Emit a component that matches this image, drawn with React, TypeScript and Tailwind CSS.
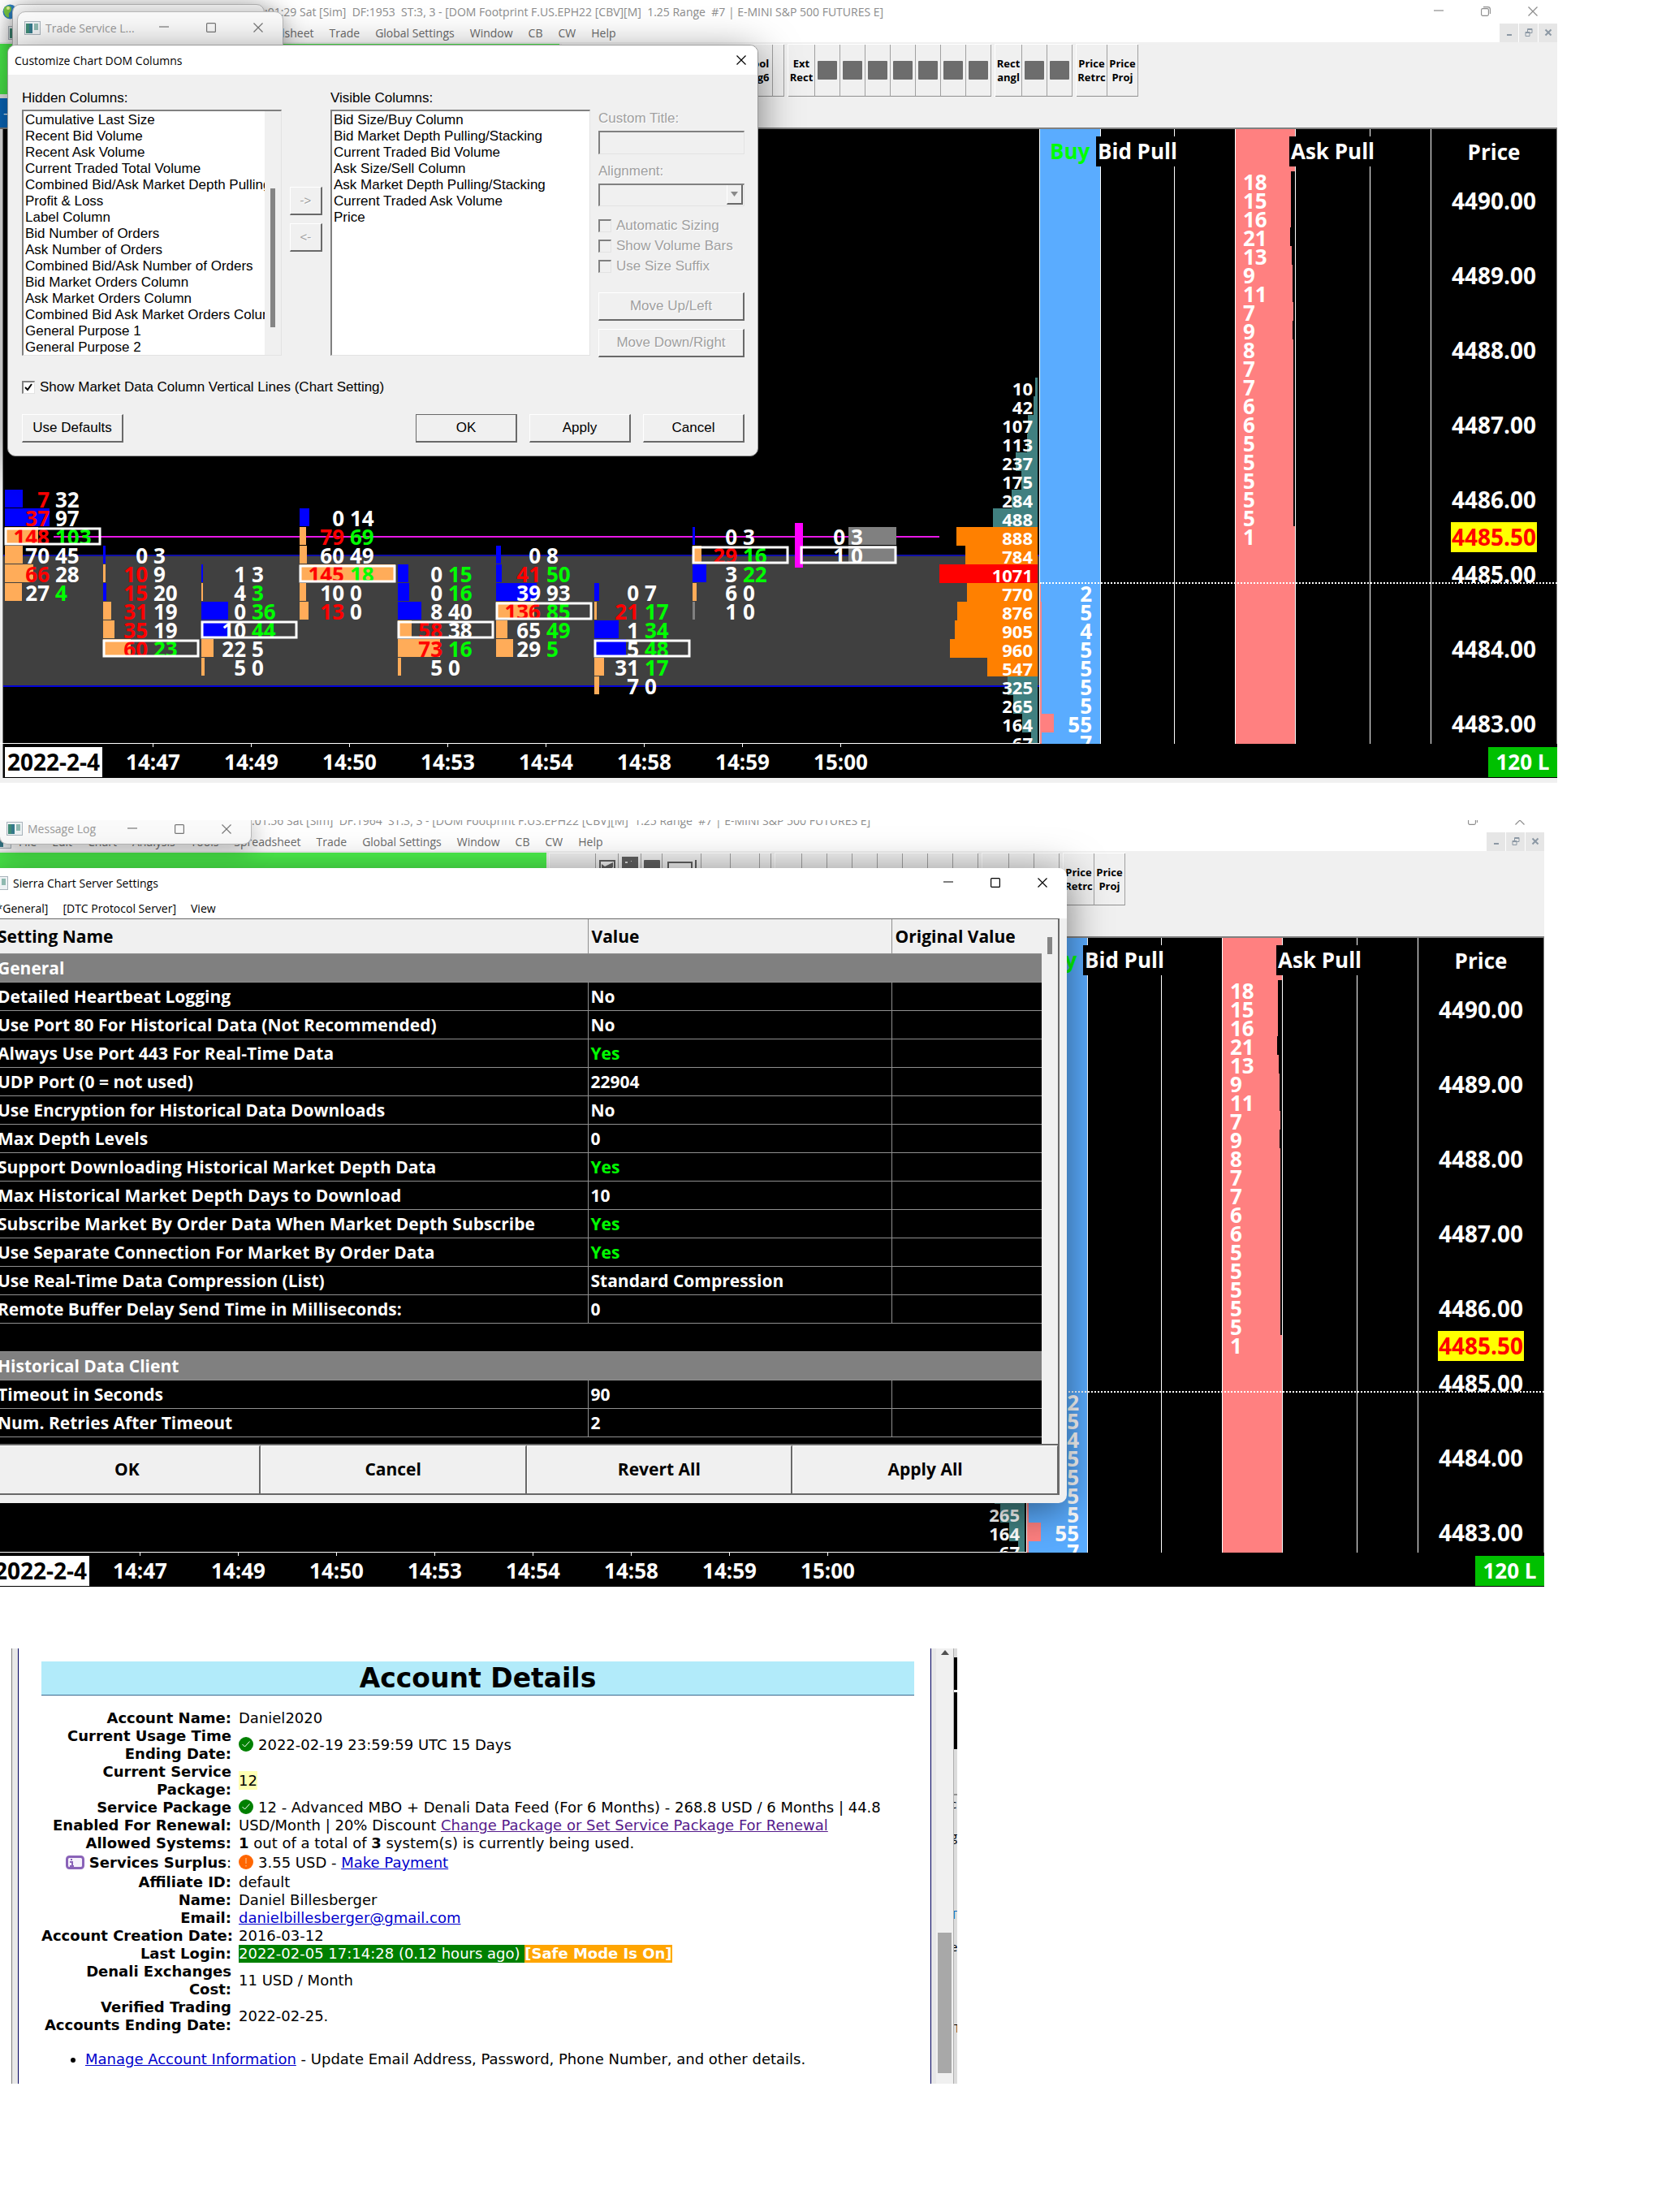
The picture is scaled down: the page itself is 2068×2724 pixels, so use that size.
import type { ReactNode } from 'react'
import clsx from 'clsx'

const ROW = 23
// Distance from the top of the plot to the row that holds 4486.00
const FIRST_ROW = 444

type Tone = 'w' | 'r' | 'g'
type BarTone = 'blue' | 'orange' | 'gray' | 'none'

const TEXT_FILL: Record<Tone, string> = { w: '#ffffff', r: '#ff0000', g: '#00ff00' }
const BAR_FILL: Record<BarTone, string> = {
  blue: '#0000ff',
  orange: '#ffac59',
  gray: '#808080',
  none: 'transparent',
}

// [bid, bid tone, ask, ask tone, bar tone, bar width, point of control]
type Cell = [number, Tone, number, Tone, BarTone, number, boolean?]

interface FootprintBar {
  x: number
  row: number
  cells: Cell[]
}

const FOOTPRINT: FootprintBar[] = [
  {
    x: 6,
    row: 0,
    cells: [
      [7, 'r', 32, 'w', 'blue', 22],
      [37, 'r', 97, 'w', 'blue', 55],
      [148, 'r', 103, 'g', 'orange', 41, true],
      [70, 'w', 45, 'w', 'orange', 22],
      [66, 'r', 28, 'w', 'orange', 35],
      [27, 'w', 4, 'g', 'orange', 21],
    ],
  },
  {
    x: 127,
    row: 3,
    cells: [
      [0, 'w', 3, 'w', 'blue', 3],
      [10, 'r', 9, 'w', 'orange', 3],
      [15, 'r', 20, 'w', 'blue', 4],
      [31, 'r', 19, 'w', 'orange', 10],
      [35, 'r', 19, 'w', 'orange', 14],
      [60, 'r', 23, 'g', 'orange', 34, true],
    ],
  },
  {
    x: 248,
    row: 4,
    cells: [
      [1, 'w', 3, 'w', 'blue', 2],
      [4, 'w', 3, 'g', 'orange', 2],
      [0, 'w', 36, 'g', 'blue', 33],
      [10, 'w', 44, 'g', 'blue', 34, true],
      [22, 'w', 5, 'w', 'orange', 15],
      [5, 'w', 0, 'w', 'orange', 4],
    ],
  },
  {
    x: 369,
    row: 1,
    cells: [
      [0, 'w', 14, 'w', 'blue', 12],
      [79, 'r', 69, 'g', 'orange', 8],
      [60, 'w', 49, 'w', 'orange', 9],
      [145, 'r', 18, 'g', 'orange', 118, true],
      [10, 'w', 0, 'w', 'orange', 8],
      [13, 'r', 0, 'w', 'orange', 11],
    ],
  },
  {
    x: 490,
    row: 4,
    cells: [
      [0, 'w', 15, 'g', 'blue', 13],
      [0, 'w', 16, 'g', 'blue', 14],
      [8, 'w', 40, 'w', 'blue', 29],
      [58, 'r', 38, 'w', 'orange', 17, true],
      [73, 'r', 16, 'g', 'orange', 52],
      [5, 'w', 0, 'w', 'orange', 4],
    ],
  },
  {
    x: 611,
    row: 3,
    cells: [
      [0, 'w', 8, 'w', 'blue', 6],
      [41, 'r', 50, 'g', 'blue', 7],
      [39, 'w', 93, 'w', 'blue', 50],
      [136, 'r', 85, 'g', 'orange', 47, true],
      [65, 'w', 49, 'g', 'orange', 14],
      [29, 'w', 5, 'g', 'orange', 21],
    ],
  },
  {
    x: 732,
    row: 5,
    cells: [
      [0, 'w', 7, 'w', 'blue', 6],
      [21, 'r', 17, 'g', 'orange', 3],
      [1, 'w', 34, 'g', 'blue', 30],
      [5, 'w', 48, 'g', 'blue', 39, true],
      [31, 'w', 17, 'g', 'orange', 12],
      [7, 'w', 0, 'w', 'orange', 6],
    ],
  },
  {
    x: 853,
    row: 2,
    cells: [
      [0, 'w', 3, 'w', 'blue', 3],
      [29, 'r', 16, 'g', 'orange', 11, true],
      [3, 'w', 22, 'g', 'blue', 17],
      [6, 'w', 0, 'w', 'orange', 5],
      [1, 'w', 0, 'w', 'gray', 3],
    ],
  },
  {
    x: 986,
    row: 2,
    cells: [
      [0, 'w', 3, 'w', 'none', 0],
      [1, 'w', 0, 'w', 'none', 0, true],
    ],
  },
]

const VOLUMES = [
  10, 42, 107, 113, 237, 175, 284, 488, 888, 784, 1071, 770, 876, 905, 960, 547, 325, 265, 164, 67,
]
const ASK_SIZES = [18, 15, 16, 21, 13, 9, 11, 7, 9, 8, 7, 7, 6, 6, 5, 5, 5, 5, 5, 1]
const BID_SIZES = [2, 5, 4, 5, 5, 5, 5, 55, 7]
const TIMES = ['14:47', '14:49', '14:50', '14:53', '14:54', '14:58', '14:59', '15:00']
const MENUS = [
  'File',
  'Edit',
  'Chart',
  'Analysis',
  'Tools',
  'Spreadsheet',
  'Trade',
  'Global Settings',
  'Window',
  'CB',
  'CW',
  'Help',
]

const HIDDEN_COLUMNS = [
  'Cumulative Last Size',
  'Recent Bid Volume',
  'Recent Ask Volume',
  'Current Traded Total Volume',
  'Combined Bid/Ask Market Depth Pulling/Stacking',
  'Profit & Loss',
  'Label Column',
  'Bid Number of Orders',
  'Ask Number of Orders',
  'Combined Bid/Ask Number of Orders',
  'Bid Market Orders Column',
  'Ask Market Orders Column',
  'Combined Bid Ask Market Orders Column',
  'General Purpose 1',
  'General Purpose 2',
]
const VISIBLE_COLUMNS = [
  'Bid Size/Buy Column',
  'Bid Market Depth Pulling/Stacking',
  'Current Traded Bid Volume',
  'Ask Size/Sell Column',
  'Ask Market Depth Pulling/Stacking',
  'Current Traded Ask Volume',
  'Price',
]

const GENERAL_SETTINGS: [string, string][] = [
  ['Detailed Heartbeat Logging', 'No'],
  ['Use Port 80 For Historical Data (Not Recommended)', 'No'],
  ['Always Use Port 443 For Real-Time Data', 'Yes'],
  ['UDP Port (0 = not used)', '22904'],
  ['Use Encryption for Historical Data Downloads', 'No'],
  ['Max Depth Levels', '0'],
  ['Support Downloading Historical Market Depth Data', 'Yes'],
  ['Max Historical Market Depth Days to Download', '10'],
  ['Subscribe Market By Order Data When Market Depth Subscribe', 'Yes'],
  ['Use Separate Connection For Market By Order Data', 'Yes'],
  ['Use Real-Time Data Compression (List)', 'Standard Compression'],
  ['Remote Buffer Delay Send Time in Milliseconds:', '0'],
]
const HISTORICAL_SETTINGS: [string, string][] = [
  ['Timeout in Seconds', '90'],
  ['Num. Retries After Timeout', '2'],
]

/* ---------- small glyphs ---------- */

function MinGlyph() {
  return (
    <svg className="h-3 w-3" viewBox="0 0 12 12" aria-hidden="true">
      <path d="M0 5h12" stroke="currentColor" strokeWidth="1.2" />
    </svg>
  )
}

function MaxGlyph() {
  return (
    <svg className="h-3 w-3" viewBox="0 0 12 12" aria-hidden="true">
      <rect x="0.6" y="0.6" width="10.8" height="10.8" rx="1" fill="none" stroke="currentColor" strokeWidth="1.2" />
    </svg>
  )
}

function RestoreGlyph() {
  return (
    <svg className="h-3 w-3" viewBox="0 0 12 12" aria-hidden="true">
      <rect x="0.6" y="2.6" width="8.8" height="8.8" rx="1.6" fill="none" stroke="currentColor" strokeWidth="1.1" />
      <path d="M3 0.6h5.6a2.8 2.8 0 0 1 2.8 2.8V9" fill="none" stroke="currentColor" strokeWidth="1.1" />
    </svg>
  )
}

function CloseGlyph() {
  return (
    <svg className="h-3 w-3" viewBox="0 0 12 12" aria-hidden="true">
      <path d="M0.5 0.5l11 11M11.5 0.5l-11 11" stroke="currentColor" strokeWidth="1.2" />
    </svg>
  )
}

function AppIcon() {
  return (
    <svg className="h-[17px] w-5 shrink-0" viewBox="0 0 20 17" aria-hidden="true">
      <rect x="0.5" y="0.5" width="19" height="16" fill="#eef2f4" stroke="#a9b4bc" />
      <rect x="2" y="3" width="8" height="12" fill="#3f8a76" />
      <rect x="6" y="3" width="4" height="12" fill="#2f6f9a" opacity="0.6" />
      <rect x="12" y="3" width="5" height="8" fill="#8fb9b0" />
    </svg>
  )
}

function Globe() {
  return (
    <svg className="h-[19px] w-[19px] shrink-0" viewBox="0 0 19 19" aria-hidden="true">
      <circle cx="9.5" cy="9.5" r="9" fill="#2f7fc0" />
      <path d="M4 3c4-2 8 0 7 4s-4 3-3 7-3 3-5-1-2-8 1-10z" fill="#7ac943" />
      <circle cx="7" cy="5" r="2" fill="#e9f59a" />
    </svg>
  )
}

function StatusDot({ kind }: { kind: 'ok' | 'warn' }) {
  return (
    <svg className="mr-[6px] -mt-1 inline-block h-[18px] w-[18px]" viewBox="0 0 18 18" aria-hidden="true">
      <circle cx="9" cy="9" r="9" fill={kind === 'ok' ? '#008000' : '#ff6600'} />
      {kind === 'ok' ? (
        <path d="M4.5 9l3 3 6-6.500" fill="none" stroke="#fff" strokeWidth="1" />
      ) : (
        <path d="M9 4v7M9 13v1.500" stroke="#ffc89a" strokeWidth="1" />
      )}
    </svg>
  )
}

/* ---------- chart window ---------- */

function ToolButton({ className, children }: { className: string; children?: ReactNode }) {
  return (
    <button
      type="button"
      className={clsx(
        'flex h-16 shrink-0 flex-col items-center justify-center border-r border-b border-r-[#a0a0a0] border-b-[#909090] text-[13px] leading-[17px] font-bold text-black',
        className,
      )}
    >
      {children}
    </button>
  )
}

function Square() {
  return <span className="h-[23px] w-6 rounded-[1px] bg-[#6d6d6d]" />
}

function Toolbar() {
  return (
    <div className="flex h-[107px] flex-col gap-[2px] border-b-2 border-[#808080] bg-[#f0f0f0] pt-[2px]">
      <div className="flex">
        <div className="mr-[3px] h-[62px] w-[689px] shrink-0 bg-[#4cf04c]" />
        <div className="mr-1 flex border-t border-white">
          <ToolButton className="w-[58px] border-l border-l-white" />
          <ToolButton className="w-7 justify-start pt-2">
            <svg className="h-6 w-5" viewBox="0 0 20 24" aria-hidden="true">
              <rect x="1" y="1" width="18" height="20" fill="none" stroke="#606060" strokeWidth="2" />
              <path d="M3 5l4 3 4-2 6-3v6l-4 3v6H6v-5l-3-2z" fill="#606060" />
            </svg>
          </ToolButton>
          <ToolButton className="w-7 justify-start pt-1">
            <svg className="h-7 w-5" viewBox="0 0 20 28" aria-hidden="true">
              <rect width="20" height="28" fill="#606060" />
              <path d="M4 6h3v2H4zM11 5h1v1h-1z" fill="#ddd" />
            </svg>
          </ToolButton>
          <ToolButton className="w-[26px] justify-start pt-2">
            <span className="h-6 w-5 rounded-[1px] bg-[#606060]" />
          </ToolButton>
          <ToolButton className="w-12 justify-start pt-2">
            <svg className="h-6 w-9" viewBox="0 0 36 24" aria-hidden="true">
              <path d="M1 22V3h29v19" fill="none" stroke="#606060" strokeWidth="2" />
              <path d="M35 0v20" stroke="#606060" strokeWidth="2" />
            </svg>
          </ToolButton>
          <ToolButton className="w-9" />
          <ToolButton className="w-9 text-[#777777]">
            <span>Tool</span>
            <span>Cfg6</span>
          </ToolButton>
          <ToolButton className="w-[14px]" />
        </div>
        <div className="mr-1 flex border-t border-l border-white">
          <ToolButton className="w-[33px]">
            <span>Ext</span>
            <span>Rect</span>
          </ToolButton>
          {Array.from({ length: 7 }, (_, i) => (
            <ToolButton key={i} className="w-[31px]">
              <Square />
            </ToolButton>
          ))}
        </div>
        <div className="mr-1 flex border-t border-l border-white">
          <ToolButton className="w-[33px]">
            <span>Rect</span>
            <span>angl</span>
          </ToolButton>
          <ToolButton className="w-[31px]">
            <Square />
          </ToolButton>
          <ToolButton className="w-[31px]">
            <Square />
          </ToolButton>
        </div>
        <div className="flex border-t border-l border-white">
          <ToolButton className="w-[38px]">
            <span>Price</span>
            <span>Retrc</span>
          </ToolButton>
          <ToolButton className="w-[38px]">
            <span>Price</span>
            <span>Proj</span>
          </ToolButton>
        </div>
      </div>
      <div className="flex h-9 w-[120px] items-center bg-[#0a6cc4] pl-1 text-white">–</div>
    </div>
  )
}

function FootprintCell({ x, y, cell }: { x: number; y: number; cell: Cell }) {
  const [bid, bidTone, ask, askTone, barTone, barWidth, poc] = cell
  return (
    <g>
      <rect x={x} y={y} width={barWidth} height={ROW - 1} fill={BAR_FILL[barTone]} />
      <text x={x + 55} y={y + 22} textAnchor="end" fill={TEXT_FILL[bidTone]}>
        {bid}
      </text>
      <text x={x + 62} y={y + 22} fill={TEXT_FILL[askTone]}>
        {ask}
      </text>
      {poc && (
        <rect x={x + 1} y={y + 2} width={116} height={19} fill="none" stroke="#ffffff" strokeWidth={3} />
      )}
    </g>
  )
}

function Footprint() {
  return (
    <svg className="h-full w-full text-[26px] font-bold" aria-label="DOM Footprint">
      <rect x="0" y="525" width="100%" height="161" fill="#404040" />
      <rect x="0" y="524" width="100%" height="2" fill="#1010a8" />
      <rect x="0" y="685" width="100%" height="2" fill="#0000d8" />
      <rect x="66" y="501" width="1091" height="2" fill="#e818e8" />
      <rect x="979" y="485" width="10" height="55" fill="#ff00ff" />
      <rect x="1045" y="490" width="59" height="22" fill="#808080" />
      <rect x="1045" y="513" width="59" height="22" fill="#808080" />
      {FOOTPRINT.map((bar) =>
        bar.cells.map((cell, i) => (
          <FootprintCell key={`${bar.x}-${i}`} x={bar.x} y={FIRST_ROW + (bar.row + i) * ROW} cell={cell} />
        )),
      )}
    </svg>
  )
}

function VolumeProfile() {
  return (
    <ul className="absolute top-[306px] right-[2px] w-[121px] text-[22px] leading-[26px] font-bold text-white">
      {VOLUMES.map((v) => (
        <li key={v} className="relative flex h-[23px] justify-end">
          <span
            className={clsx(
              'absolute inset-y-0 right-0',
              v === 1071 ? 'bg-[#ff0000]' : v > 500 ? 'bg-[#ff8000]' : 'bg-[#408080]',
            )}
            style={{ width: Math.max(3, Math.round((v / 1071) * 121)) }}
          />
          <span className="relative pr-[6px]">{v}</span>
        </li>
      ))}
    </ul>
  )
}

function DomLadder() {
  return (
    <div className="relative flex shrink-0 text-[26px] leading-[26px] font-bold text-white">
      <div className="w-[75px] overflow-hidden border-r border-white bg-[#5aacff] pt-[559px]">
        {BID_SIZES.map((size, i) => (
          <div key={i} className="relative flex h-[23px] justify-end pr-[10px]">
            <span
              className="absolute inset-y-0 left-0 bg-[#ff8080]"
              style={{ width: Math.max(i > 0 ? 2 : 0, Math.round(size * 0.31)) }}
            />
            <span className="relative">{size}</span>
          </div>
        ))}
      </div>
      <div className="w-[91px] border-r border-white" />
      <div className="w-[75px] border-r border-white" />
      <div className="w-[74px] border-r border-white bg-[#ff8080] pt-[52px]">
        {ASK_SIZES.map((size, i) => (
          <div key={i} className="relative h-[23px] pl-[9px]">
            <span
              className="absolute inset-y-0 right-0 bg-black"
              style={{ width: size > 1 ? Math.max(2, Math.round(size * 0.3)) : 0 }}
            />
            <span className="relative">{size}</span>
          </div>
        ))}
      </div>
      <div className="w-[92px] border-r border-white" />
      <div className="w-[75px] border-r border-white" />
      <div className="flex w-[155px] flex-col items-center border-r border-[#808080] text-[28px] leading-[37px]">
        <span className="mt-[10px] mb-[23px] text-[26px]">Price</span>
        {['4490.00', '4489.00', '4488.00', '4487.00'].map((price) => (
          <span key={price} className="mb-[55px]">
            {price}
          </span>
        ))}
        <span className="mb-[9px]">4486.00</span>
        <span className="bg-[#ffff00] px-px text-[#ff0000]">4485.50</span>
        <span className="mt-[9px]">4485.00</span>
        <span className="mt-[55px]">4484.00</span>
        <span className="mt-[55px]">4483.00</span>
      </div>

      {/* headings spill over the column lines */}
      <span className="absolute top-[9px] left-3 leading-[37px] text-[#00ff00]">Buy</span>
      <span className="absolute top-[9px] left-[69px] bg-black pl-[2px] leading-[37px]">Bid Pull</span>
      <span className="absolute top-[9px] left-[307px] bg-black pl-[2px] leading-[37px]">Ask Pull</span>
      <span className="absolute inset-x-0 top-[558px] border-t-2 border-dotted border-white" />
    </div>
  )
}

function ChartWindow({ title }: { title: string }) {
  return (
    <div className="bg-white">
      <div className="flex h-7 items-center text-[#8c8c8c]">
        <div className="w-[326px] shrink-0 pl-[3px]">
          <Globe />
        </div>
        <h2 className="flex-1 text-[14px] whitespace-pre">{title}</h2>
        <div className="flex gap-[46px] pr-6">
          <button type="button" aria-label="Minimize">
            <MinGlyph />
          </button>
          <button type="button" aria-label="Restore">
            <RestoreGlyph />
          </button>
          <button type="button" aria-label="Close">
            <CloseGlyph />
          </button>
        </div>
      </div>
      <div className="flex h-6 items-center">
        <div className="w-[39px] shrink-0 pl-[10px]">
          <AppIcon />
        </div>
        <nav className="flex flex-1 gap-[19px] text-[14px] text-[#6a6a6a]">
          {MENUS.map((m) => (
            <button key={m} type="button" className="whitespace-nowrap">
              {m}
            </button>
          ))}
        </nav>
        <div className="flex gap-px text-[#8c98a4]">
          <button type="button" aria-label="Minimize chart" className="flex h-[23px] w-[23px] items-center justify-center bg-[#e6e6e6]">
            <svg className="h-[10px] w-[10px]" viewBox="0 0 10 10">
              <path d="M2 8h6" stroke="currentColor" strokeWidth="2" />
            </svg>
          </button>
          <button type="button" aria-label="Restore chart" className="flex h-[23px] w-[23px] items-center justify-center bg-[#e6e6e6]">
            <svg className="h-[10px] w-[10px]" viewBox="0 0 10 10" fill="none" stroke="currentColor">
              <path d="M1 4.500h5v5H1zM3.500 4.500v-4h5.500v5H6M1 5.500h5M3.500 1.500H9" />
            </svg>
          </button>
          <button type="button" aria-label="Close chart" className="flex h-[23px] w-[23px] items-center justify-center bg-[#e6e6e6]">
            <svg className="h-[10px] w-[10px]" viewBox="0 0 10 10">
              <path d="M1.500 1.500l7 7M8.500 1.500l-7 7" stroke="currentColor" strokeWidth="2" />
            </svg>
          </button>
        </div>
      </div>
      <Toolbar />
      <div className="bg-black">
        <div className="flex h-[757px] overflow-hidden">
          <div className="relative min-w-0 flex-1 overflow-hidden border-r border-b border-white">
            <Footprint />
            <span className="absolute inset-y-0 left-0 w-1 border-r border-[#808080] bg-[#f0f0f0]" />
            <VolumeProfile />
          </div>
          <DomLadder />
        </div>
        <div className="flex h-[42px] text-[26px] leading-[44px] font-bold text-white">
          <span className="w-1 shrink-0 border-r border-[#808080] bg-[#f0f0f0]" />
          <span className="mt-1 mr-[2px] ml-[2px] h-[37px] w-[120px] shrink-0 bg-white text-center text-[28px] leading-[37px] whitespace-nowrap text-black">
            2022-2-4
          </span>
          {TIMES.map((t) => (
            <span key={t} className="flex w-[121px] shrink-0 flex-col items-center">
              <span className="h-1 w-px bg-white" />
              <span className="leading-[37px]">{t}</span>
            </span>
          ))}
          <span className="mt-1 ml-auto h-[37px] w-[85px] bg-[#00c000] text-center leading-[37px]">120 L</span>
        </div>
      </div>
    </div>
  )
}

/* ---------- floating windows ---------- */

function SmallWindow({ title, className }: { title: string; className: string }) {
  return (
    <div
      className={clsx(
        'absolute flex items-center border border-[#b8b8b8] bg-[#fafafa] text-[#999999] shadow-[0_4px_30px_rgba(0,0,0,0.35)]',
        className,
      )}
    >
      <AppIcon />
      <h3 className="ml-[6px] flex-1 text-[14px] whitespace-nowrap">{title}</h3>
      <div className="flex gap-[46px] text-[#777777]">
        <button type="button" aria-label="Minimize">
          <MinGlyph />
        </button>
        <button type="button" aria-label="Maximize">
          <MaxGlyph />
        </button>
        <button type="button" aria-label="Close">
          <CloseGlyph />
        </button>
      </div>
    </div>
  )
}

function ClassicButton({
  children,
  disabled,
  primary,
  className,
}: {
  children: ReactNode
  disabled?: boolean
  primary?: boolean
  className: string
}) {
  return (
    <button
      type="button"
      disabled={disabled}
      className={clsx(
        'h-[35px] shrink-0 border-t border-l border-r-2 border-b-2 border-r-[#696969] border-b-[#696969] bg-[#f0f0f0]',
        primary ? 'border-t-[#696969] border-l-[#696969]' : 'border-t-white border-l-white',
        disabled ? 'text-[#a0a0a0] [text-shadow:1px_1px_0_#fff]' : 'text-black',
        className,
      )}
    >
      {children}
    </button>
  )
}

const SUNKEN = 'border-t-2 border-l-2 border-r border-b border-t-[#808080] border-l-[#808080] border-r-[#e3e3e3] border-b-[#e3e3e3]'

function ListBox({ id, items, scroll }: { id: string; items: string[]; scroll?: boolean }) {
  return (
    <div className={clsx('flex h-[303px] w-[320px] bg-white', SUNKEN)}>
      <ul role="listbox" aria-labelledby={id} className="min-w-0 flex-1 overflow-hidden pt-px leading-5">
        {items.map((item) => (
          <li key={item} role="option" aria-selected={false} className="h-5 pl-[2px] whitespace-nowrap">
            {item}
          </li>
        ))}
      </ul>
      {scroll && (
        <div className="w-5 bg-[#f0f0f0] pt-[95px] pl-[7px]">
          <div className="h-[171px] w-[6px] bg-[#858585]" />
        </div>
      )}
    </div>
  )
}

function DisabledCheck({ label }: { label: string }) {
  return (
    <label className="flex h-[25px] items-center gap-[6px]">
      <input type="checkbox" disabled className={clsx('h-4 w-4 appearance-none bg-[#f0f0f0]', SUNKEN)} />
      {label}
    </label>
  )
}

function CustomizeDialog() {
  return (
    <div
      role="dialog"
      aria-labelledby="dom-title"
      className="absolute top-[55px] left-[9px] w-[925px] overflow-hidden rounded-[10px] border border-[#9a9a9a] bg-[#f0f0f0] pb-4 shadow-[0_12px_50px_rgba(0,0,0,0.5)]"
    >
      <div className="flex h-9 items-center justify-between bg-white pr-[14px] pl-2">
        <h2 id="dom-title" className="text-[14px]">
          Customize Chart DOM Columns
        </h2>
        <button type="button" aria-label="Close">
          <CloseGlyph />
        </button>
      </div>
      <div className="pt-[19px] pr-4 pl-[17px] font-['Liberation_Sans',Arial,sans-serif] text-[17px] leading-5 text-black">
        <div className="flex">
          <div className="shrink-0">
            <div id="hidden-cols" className="mb-1">
              Hidden Columns:
            </div>
            <ListBox id="hidden-cols" items={HIDDEN_COLUMNS} scroll />
          </div>
          <div className="flex w-[60px] shrink-0 flex-col items-center gap-[10px] pt-[119px]">
            <ClassicButton disabled className="w-10 text-[15px]">
              -&gt;
            </ClassicButton>
            <ClassicButton disabled className="w-10 text-[15px]">
              &lt;-
            </ClassicButton>
          </div>
          <div className="shrink-0">
            <div id="visible-cols" className="mb-1">
              Visible Columns:
            </div>
            <ListBox id="visible-cols" items={VISIBLE_COLUMNS} />
          </div>
          <div className="ml-[10px] flex min-w-0 flex-1 flex-col pt-[25px] text-[#a0a0a0] [text-shadow:1px_1px_0_#fff]">
            <label htmlFor="custom-title">Custom Title:</label>
            <input id="custom-title" disabled className={clsx('mt-[5px] h-[29px] w-full bg-[#f0f0f0]', SUNKEN)} />
            <label htmlFor="alignment" className="mt-[11px]">
              Alignment:
            </label>
            <div className="relative mt-[5px]">
              <select id="alignment" disabled className={clsx('h-7 w-full appearance-none bg-[#f0f0f0]', SUNKEN)} />
              <span className="absolute top-[2px] right-[2px] flex h-6 w-5 items-center justify-center border-r-2 border-b-2 border-l border-[#696969] border-l-white text-[#8a8a8a]">
                <svg className="h-[6px] w-[9px]" viewBox="0 0 9 6" aria-hidden="true">
                  <path d="M0 0h9L4.500 6z" fill="currentColor" />
                </svg>
              </span>
            </div>
            <div className="mt-[11px] mb-5">
              <DisabledCheck label="Automatic Sizing" />
              <DisabledCheck label="Show Volume Bars" />
              <DisabledCheck label="Use Size Suffix" />
            </div>
            <ClassicButton disabled className="mb-[10px] w-full">
              Move Up/Left
            </ClassicButton>
            <ClassicButton disabled className="w-full">
              Move Down/Right
            </ClassicButton>
          </div>
        </div>
        <label className="mt-[27px] flex items-center gap-[6px]">
          <span className="relative flex">
            <input type="checkbox" defaultChecked className={clsx('h-4 w-4 appearance-none bg-white', SUNKEN)} />
            <svg className="absolute top-[3px] left-[3px] h-[10px] w-[10px]" viewBox="0 0 10 10" aria-hidden="true">
              <path d="M1 5l3 3 5-7" fill="none" stroke="#000" strokeWidth="2" />
            </svg>
          </span>
          Show Market Data Column Vertical Lines (Chart Setting)
        </label>
        <div className="mt-[23px] flex gap-[15px]">
          <ClassicButton className="mr-auto w-[125px]">Use Defaults</ClassicButton>
          <ClassicButton primary className="w-[125px]">
            OK
          </ClassicButton>
          <ClassicButton className="w-[125px]">Apply</ClassicButton>
          <ClassicButton className="w-[125px]">Cancel</ClassicButton>
        </div>
      </div>
    </div>
  )
}

function SettingRows({ rows }: { rows: [string, string][] }) {
  return rows.map(([name, value]) => (
    <tr key={name} className="h-[35px] border-b border-[#909090]">
      <td className="border-r border-[#909090] pl-1">{name}</td>
      <td className={clsx('border-r border-[#909090] pl-[3px]', value === 'Yes' && 'text-[#00ff00]')}>{value}</td>
      <td />
    </tr>
  ))
}

function SectionRow({ children }: { children: ReactNode }) {
  return (
    <tr className="h-[35px] border-b border-[#909090] bg-[#808080]">
      <th colSpan={3} className="pl-1 text-left">
        {children}
      </th>
    </tr>
  )
}

function ServerSettingsDialog() {
  return (
    <div
      role="dialog"
      aria-labelledby="server-title"
      className="absolute top-[59px] -left-4 w-[1330px] overflow-hidden rounded-[10px] bg-[#f0f0f0] shadow-[0_8px_50px_rgba(0,0,0,0.5)]"
    >
      <div className="flex h-9 items-center bg-white pr-[24px] pl-[6px]">
        <AppIcon />
        <h2 id="server-title" className="ml-[6px] flex-1 text-[14px]">
          Sierra Chart Server Settings
        </h2>
        <div className="flex gap-[46px] text-black">
          <button type="button" aria-label="Minimize">
            <MinGlyph />
          </button>
          <button type="button" aria-label="Maximize">
            <MaxGlyph />
          </button>
          <button type="button" aria-label="Close">
            <CloseGlyph />
          </button>
        </div>
      </div>
      <nav className="flex h-[26px] items-center gap-[18px] bg-white pl-[7px] text-[14px]">
        <button type="button">[*General]</button>
        <button type="button">[DTC Protocol Server]</button>
        <button type="button">View</button>
      </nav>
      <div className="mx-[9px] mb-[10px] border-t border-r-2 border-[#696969]">
        <div className="flex h-[646px] overflow-hidden bg-black">
          <table className="flex-1 table-fixed self-start text-[21px] leading-6 font-bold text-white">
            <colgroup>
              <col className="w-[731px]" />
              <col className="w-[374px]" />
              <col />
            </colgroup>
            <thead>
              <tr className="h-[42px] border-b border-[#909090] bg-[#f0f0f0] text-left text-black">
                <th className="border-r border-[#909090] pl-1">Setting Name</th>
                <th className="border-r border-[#909090] pl-1">Value</th>
                <th className="pl-1">Original Value</th>
              </tr>
            </thead>
            <tbody>
              <SectionRow>General</SectionRow>
              <SettingRows rows={GENERAL_SETTINGS} />
              <tr className="h-[35px] border-b border-[#909090]">
                <td colSpan={3} />
              </tr>
              <SectionRow>Historical Data Client</SectionRow>
              <SettingRows rows={HISTORICAL_SETTINGS} />
            </tbody>
          </table>
          <div className="w-5 shrink-0 bg-[#f0f0f0] pt-[22px] pl-[7px]">
            <div className="h-[21px] w-[6px] bg-[#858585]" />
          </div>
        </div>
        <div className="flex border-t-2 border-b-2 border-[#696969]">
          {['OK', 'Cancel', 'Revert All', 'Apply All'].map((label) => (
            <button
              key={label}
              type="button"
              className="h-[59px] flex-1 border-t border-r-2 border-l border-[#696969] border-t-white border-l-white text-[21px] font-bold text-black last:border-r"
            >
              {label}
            </button>
          ))}
        </div>
      </div>
    </div>
  )
}

/* ---------- account page ---------- */

function AccountRow({ label, children }: { label: ReactNode; children: ReactNode }) {
  return (
    <tr>
      <th className="p-0 text-right whitespace-nowrap">{label}</th>
      <td className="p-0 pl-[9px]">{children}</td>
    </tr>
  )
}

const LINK = 'text-[#0000cc] underline'

function AccountDetails() {
  return (
    <section className="mt-[76px] ml-[14px] flex h-[536px] w-[1165px] overflow-hidden bg-white">
      <div className="w-[9px] shrink-0 border-r border-l border-r-[#000060] border-l-[#808080] bg-[#e8e8e8]" />
      <div className="flex-1 pt-4 pr-5 pl-7 font-['DejaVu_Sans',Verdana,sans-serif] text-[18px] leading-[22px] text-black">
        <h1 className="h-[42px] border-b border-[#3a6a90] bg-[#b2ebfa] text-center text-[33px] leading-[42px] font-bold">
          Account Details
        </h1>
        <table className="mt-[17px] w-full table-fixed">
          <colgroup>
            <col className="w-[234px]" />
            <col />
          </colgroup>
          <tbody>
            <AccountRow label="Account Name:">Daniel2020</AccountRow>
            <AccountRow
              label={
                <>
                  Current Usage Time
                  <br />
                  Ending Date:
                </>
              }
            >
              <StatusDot kind="ok" />
              2022-02-19 23:59:59 UTC 15 Days
            </AccountRow>
            <AccountRow
              label={
                <>
                  Current Service
                  <br />
                  Package:
                </>
              }
            >
              <span className="bg-[#ffffb3] py-px">12</span>
            </AccountRow>
            <AccountRow
              label={
                <>
                  Service Package
                  <br />
                  Enabled For Renewal:
                </>
              }
            >
              <StatusDot kind="ok" />
              12 - Advanced MBO + Denali Data Feed (For 6 Months) - 268.8 USD / 6 Months | 44.8
              <br />
              USD/Month | 20% Discount{' '}
              <a href="#renewal" className="text-[#551a8b] underline">
                Change Package or Set Service Package For Renewal
              </a>
            </AccountRow>
            <AccountRow label="Allowed Systems:">
              <b>1</b> out of a total of <b>3</b> system(s) is currently being used.
            </AccountRow>
            <AccountRow
              label={
                <span className="flex h-[26px] items-center justify-end gap-[6px]">
                  <svg className="h-[18px] w-[23px]" viewBox="0 0 23 18" aria-hidden="true">
                    <rect x="1.500" y="1.500" width="20" height="14" rx="3" fill="#f6f2fb" stroke="#8a63b8" strokeWidth="3" />
                    <path d="M5 8h3v5M5 13h5M7 4v2" fill="none" stroke="#8a63b8" strokeWidth="2" />
                  </svg>
                  <span>
                    Services Surplus<span className="font-normal">:</span>
                  </span>
                </span>
              }
            >
              <StatusDot kind="warn" />
              3.55 USD -{' '}
              <a href="#payment" className={LINK}>
                Make Payment
              </a>
            </AccountRow>
            <AccountRow label="Affiliate ID:">default</AccountRow>
            <AccountRow label="Name:">Daniel Billesberger</AccountRow>
            <AccountRow label="Email:">
              <a href="mailto:danielbillesberger@gmail.com" className={LINK}>
                danielbillesberger@gmail.com
              </a>
            </AccountRow>
            <AccountRow label="Account Creation Date:">2016-03-12</AccountRow>
            <AccountRow label="Last Login:">
              <span className="flex text-white">
                <span className="bg-[#008000] whitespace-pre">2022-02-05 17:14:28 (0.12 hours ago) </span>
                <b className="bg-[#ffa500]">[Safe Mode Is On]</b>
              </span>
            </AccountRow>
            <AccountRow
              label={
                <>
                  Denali Exchanges
                  <br />
                  Cost:
                </>
              }
            >
              11 USD / Month
            </AccountRow>
            <AccountRow
              label={
                <>
                  Verified Trading
                  <br />
                  Accounts Ending Date:
                </>
              }
            >
              2022-02-25.
            </AccountRow>
          </tbody>
        </table>
        <ul className="mt-5 list-disc pl-[54px]">
          <li>
            <a href="#manage" className={LINK}>
              Manage Account Information
            </a>{' '}
            - Update Email Address, Password, Phone Number, and other details.
          </li>
        </ul>
      </div>
      <div className="w-[7px] shrink-0 border-l border-[#000060] bg-[#e8e8e8]" />
      <div className="flex w-[21px] shrink-0 flex-col items-center bg-[#f0f0f0] pt-[2px]">
        <svg className="h-[6px] w-[10px]" viewBox="0 0 10 6" aria-hidden="true">
          <path d="M0 6h10L5 0z" fill="#505050" />
        </svg>
        <div className="mt-[342px] h-[173px] w-[17px] bg-[#a8a8a8]" />
      </div>
      {/* sliver of the window behind */}
      <div className="flex w-[5px] shrink-0 flex-col overflow-hidden border-l border-[#b0b0b0] bg-[#dcdcdc] text-[15px] leading-5">
        <div className="h-[11px] shrink-0" />
        <div className="h-10 shrink-0 bg-black" />
        <div className="h-[3px] shrink-0 bg-white" />
        <div className="h-[70px] shrink-0 bg-black" />
        <div className="mt-[55px] h-[2px] shrink-0 bg-[#909090]" />
        <span className="-ml-1">c</span>
        <span className="mt-5 -ml-1">g</span>
        <span className="mt-[76px] -ml-1 text-[#0a6cc4]">T</span>
        <span className="mt-5 -ml-1">e</span>
        <span className="mt-20">T</span>
      </div>
    </section>
  )
}

export default function App() {
  return (
    <main className="min-h-screen overflow-hidden bg-white font-['Open_Sans','Segoe_UI',sans-serif]">
      <section className="relative mr-[150px] overflow-hidden bg-[#f0f0f0] pb-[6px]">
        <ChartWindow title=":01:29 Sat [Sim]  DF:1953  ST:3, 3 - [DOM Footprint F.US.EPH22 [CBV][M]  1.25 Range  #7 | E-MINI S&P 500 FUTURES E]" />
        <div className="absolute top-[5px] left-[15px] h-[60px] w-[311px] rounded-t-[10px] border border-[#b8b8b8] bg-[#fafafa] shadow-[0_4px_30px_rgba(0,0,0,0.35)]" />
        <SmallWindow title="Trade Service L..." className="top-[14px] left-[21px] h-[60px] w-[328px] rounded-t-[10px] pr-6 pb-5 pl-2" />
        <CustomizeDialog />
      </section>

      <section className="relative mt-[46px] mr-[166px] overflow-hidden">
        <div className="-mt-[14px] -ml-4">
          <ChartWindow title=":01:56 Sat [Sim]  DF:1964  ST:3, 3 - [DOM Footprint F.US.EPH22 [CBV][M]  1.25 Range  #7 | E-MINI S&P 500 FUTURES E]" />
        </div>
        <SmallWindow title="Message Log" className="-left-px top-0 h-[30px] w-[311px] rounded-b-[10px] border-t-0 pr-6 pb-2 pl-2" />
        <ServerSettingsDialog />
      </section>

      <AccountDetails />
    </main>
  )
}
